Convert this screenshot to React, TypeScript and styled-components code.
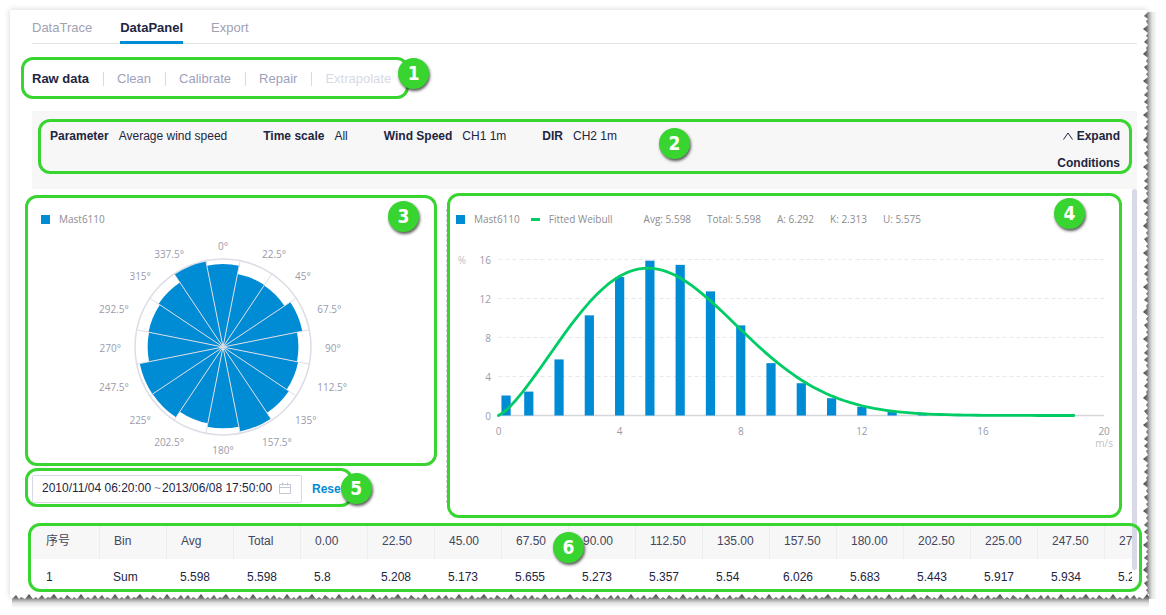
import React from "react";
import styled, { createGlobalStyle } from "styled-components";

const BLUE = "#008bd5";
const GREEN = "#38d430";
const CURVE = "#00cc66";
const INK = "#22253f";
const UI = `"Liberation Sans", Arial, "Noto Sans CJK SC", sans-serif`;
const CHART = `"Open Sans", "Noto Sans", sans-serif`;

const GlobalStyle = createGlobalStyle`
  *, *::before, *::after { box-sizing: border-box; }
  body { margin: 0; background: #fff; color: ${INK}; font: 12px/20px ${UI}; }
  button, input { font: inherit; color: inherit; background: none; border: 0; padding: 0; margin: 0; }
  button { cursor: pointer; }
`;

const Sheet = styled.main`
  position: relative;
  margin: 10px 19px 18px 10px;
  padding: 0 10px 2px 22px;
  background: #fff;
  box-shadow: 0 0 6px rgba(0, 0, 0, 0.18);
`;

const Tabs = styled.nav`
  display: flex;
  gap: 28px;
  height: 34px;
  border-bottom: 1px solid #e3e3e6;
`;

const Tab = styled.button<{ $active?: boolean }>`
  height: 34px;
  padding-top: 5px;
  font-size: 13px;
  font-weight: ${(p) => (p.$active ? 700 : 400)};
  color: ${(p) => (p.$active ? INK : "#a0a1b2")};
  border-bottom: 3px solid ${(p) => (p.$active ? BLUE : "transparent")};
`;

const SubNav = styled.nav`
  display: flex;
  align-items: center;
  height: 67px;
`;

const Steps = styled.div`
  position: relative;
  display: flex;
  align-items: center;
  height: 20px;
  padding-top: 2px;
`;

const Step = styled.button<{ $active?: boolean }>`
  font-size: 13px;
  font-weight: ${(p) => (p.$active ? 700 : 400)};
  color: ${(p) => (p.$active ? INK : "#a0a1bc")};
  & + & {
    margin-left: 14px;
    padding-left: 14px;
    background: linear-gradient(#d8d9e6, #d8d9e6) left center / 1px 14px no-repeat;
  }
  &:disabled { color: #d8d9e6; }
`;

const Conditions = styled.section`
  position: relative;
  display: flex;
  justify-content: space-between;
  align-items: flex-start;
  height: 78px;
  padding: 12px 17px 0 18px;
  background: #f7f7f7;
`;

const Filters = styled.dl`
  display: flex;
  gap: 36px;
  margin: 0;
  line-height: 27px;
`;

const Filter = styled.div`
  display: flex;
  gap: 10px;
  dt { font-weight: 700; }
  dd { margin: 0; }
`;

const ExpandButton = styled.button`
  width: 66px;
  font-weight: 700;
  line-height: 27px;
  text-align: right;
  svg { margin-right: 4px; }
`;

const Body = styled.div`
  position: relative;
  padding: 20px 5px 0 0;
`;

const ScrollThumb = styled.div`
  position: absolute;
  z-index: 1;
  top: 0;
  right: 0;
  bottom: 25px;
  width: 5px;
  border-radius: 3px;
  background: #d8d9e6;
`;

const Charts = styled.div`
  display: grid;
  grid-template-columns: 415px minmax(0, 1fr);
`;

const ChartColumn = styled.section<{ $divided?: boolean }>`
  position: relative;
  display: flex;
  flex-direction: column;
  border-right: ${(p) => (p.$divided ? "1px dashed #d0d0d8" : "0")};
`;

const Plot = styled.svg`
  display: block;
  width: 100%;
  text { font: 10px ${CHART}; fill: #9a9bab; }
  text.unit { fill: #c0c1c9; }
`;

const Legend = styled.div`
  display: flex;
  gap: 16px;
  height: 20px;
  padding-left: 9px;
  font: 10px/20px ${CHART};
  color: #8c8c90;
`;

const Series = styled.span<{ $line?: boolean }>`
  display: flex;
  align-items: center;
  gap: 9px;
  margin-left: ${(p) => (p.$line ? "-5px" : "0")};
  margin-right: ${(p) => (p.$line ? "15px" : "0")};
  &::before {
    content: "";
    width: 9px;
    height: ${(p) => (p.$line ? "3px" : "9px")};
    background: ${(p) => (p.$line ? CURVE : BLUE)};
  }
`;

const DateRow = styled.div`
  position: relative;
  display: flex;
  align-items: center;
  gap: 10px;
  width: fit-content;
  margin-top: 9px;
`;

const RangeBox = styled.div`
  display: flex;
  align-items: center;
  width: 270px;
  height: 28px;
  padding: 0 10px 2px 9px;
  border: 1px solid #d8d9e6;
  border-radius: 2px;
  span { width: 9px; text-align: center; color: #8c8c9a; }
  svg { margin-left: auto; }
`;

const DateInput = styled.input`
  width: 111px;
  height: 20px;
  outline: none;
`;

const ResetButton = styled.button`
  font-weight: 700;
  color: ${BLUE};
`;

const TableArea = styled.section`
  position: relative;
  margin-top: 20px;
`;

const TableScroll = styled.div`
  overflow: hidden;
`;

const Table = styled.table`
  table-layout: fixed;
  width: 1139px;
  border-collapse: separate;
  border-spacing: 0;
  th, td {
    width: 67px;
    height: 36px;
    padding: 0 0 0 14px;
    text-align: left;
    font-weight: 400;
  }
  th {
    background: #f7f7f7;
    color: #44465c;
  }
  th + th { border-left: 1px solid #ececf1; }
`;

type Edges = { $top: number; $right: number; $bottom: number; $left: number };

const Outline = styled.div<Edges>`
  position: absolute;
  z-index: 2;
  top: ${(p) => p.$top}px;
  right: ${(p) => p.$right}px;
  bottom: ${(p) => p.$bottom}px;
  left: ${(p) => p.$left}px;
  border: 3px solid ${GREEN};
  border-radius: 12px;
  pointer-events: none;
`;

const Badge = styled.span<{ $top: number; $left?: number; $right?: number }>`
  position: absolute;
  top: ${(p) => p.$top}px;
  left: ${(p) => (p.$left === undefined ? "auto" : `${p.$left}px`)};
  right: ${(p) => (p.$right === undefined ? "auto" : `${p.$right}px`)};
  width: 31px;
  height: 31px;
  border-radius: 50%;
  background: ${GREEN};
  box-shadow: 1px 2px 3px rgba(0, 0, 0, 0.65);
  color: #fff;
  font: bold 19px/31px "DejaVu Sans Condensed", "DejaVu Sans", sans-serif;
  text-align: center;
`;

const TornRight = styled.svg`
  position: absolute;
  top: 2px;
  right: -10px;
  width: 14px;
  height: 100%;
`;

const TornBottom = styled.svg`
  position: absolute;
  left: 2px;
  bottom: -11px;
  width: 100%;
  height: 14px;
`;

const teeth = [
  [0, 5], [4, 1], [7, 5], [9, 3], [13, 5], [17, 0], [21, 5], [24, 3], [26, 5], [30, 1],
  [33, 5], [36, 3], [38, 4], [42, 0], [46, 5], [49, 3], [52, 5], [55, 1], [60, 5], [62, 3],
  [65, 5], [69, 0], [73, 5], [76, 3], [79, 5], [83, 1], [86, 5],
];

function ShadowStops() {
  return (
    <>
      <stop offset="0" stopColor="#444" />
      <stop offset="0.3" stopColor="#777" />
      <stop offset="0.42" stopColor="#aaa" />
      <stop offset="0.65" stopColor="#e4e4e4" />
      <stop offset="1" stopColor="#fff" />
    </>
  );
}

function TornEdges() {
  const down = teeth.map(([along, out]) => `${out},${along}`).join(" ");
  const across = teeth.map(([along, out]) => `${along},${out}`).join(" ");
  return (
    <>
      <TornRight aria-hidden="true">
        <defs>
          <linearGradient id="fadeRight">{ShadowStops()}</linearGradient>
          <pattern id="teethRight" width="14" height="86" patternUnits="userSpaceOnUse">
            <polygon points={`0,0 ${down} 0,86`} fill="#fff" />
          </pattern>
        </defs>
        <rect width="14" height="100%" fill="url(#fadeRight)" />
        <rect width="14" height="100%" fill="url(#teethRight)" />
      </TornRight>
      <TornBottom aria-hidden="true">
        <defs>
          <linearGradient id="fadeBottom" x2="0" y2="1">{ShadowStops()}</linearGradient>
          <pattern id="teethBottom" width="86" height="14" patternUnits="userSpaceOnUse">
            <polygon points={`0,0 ${across} 86,0`} fill="#fff" />
          </pattern>
        </defs>
        <rect width="100%" height="14" fill="url(#fadeBottom)" />
        <rect width="100%" height="14" fill="url(#teethBottom)" />
      </TornBottom>
    </>
  );
}

const sectors = [
  5.8, 5.208, 5.173, 5.655, 5.273, 5.357, 5.54, 6.026, 5.683, 5.443, 5.917, 5.934, 5.27, 5.31, 5.42, 6.09,
];

function WindRose() {
  const cx = 191;
  const cy = 118;
  const ring = 88;
  const at = (deg: number, r: number) => {
    const a = (deg * Math.PI) / 180;
    return [cx + r * Math.sin(a), cy - r * Math.cos(a)];
  };
  return (
    <Plot viewBox="0 0 414 237" role="img" aria-label="Wind rose">
      <circle cx={cx} cy={cy} r={ring} fill="none" stroke="#dcdde6" strokeWidth="1.5" />
      {sectors.map((value, i) => {
        const r = value * 14.3;
        const [x1, y1] = at(i * 22.5 - 11.25, r);
        const [x2, y2] = at(i * 22.5 + 11.25, r);
        return <path key={i} d={`M${cx} ${cy}L${x1} ${y1}A${r} ${r} 0 0 1 ${x2} ${y2}Z`} fill={BLUE} />;
      })}
      {sectors.map((_, i) => {
        const [x, y] = at(i * 22.5 + 11.25, ring);
        return <line key={i} x1={cx} y1={cy} x2={x} y2={y} stroke="#dcdde6" />;
      })}
      {sectors.map((_, i) => {
        const [x, y] = at(i * 22.5, 102);
        const anchor = i % 8 === 0 ? "middle" : i < 8 ? "start" : "end";
        return (
          <text key={i} x={x} y={y + 5} textAnchor={anchor}>{`${i * 22.5}°`}</text>
        );
      })}
    </Plot>
  );
}

const bars: [number, number][] = [
  [0.25, 2.05], [1, 2.45], [2, 5.75], [3, 10.27], [4, 14.2], [5, 15.88], [6, 15.45], [7, 12.73],
  [8, 9.24], [9, 5.37], [10, 3.31], [11, 1.77], [12, 0.9], [13, 0.4], [14, 0.13],
];

function WeibullChart() {
  const px = (v: number) => 51.5 + v * 30.28;
  const py = (v: number) => 186.5 - v * 9.75;
  const a = 6.292;
  const k = 2.313;
  const curve = Array.from({ length: 96 }, (_, i) => {
    const v = i / 5;
    const density = (k / a) * Math.pow(v / a, k - 1) * Math.exp(-Math.pow(v / a, k));
    return `${px(v).toFixed(2)},${py(density * 100).toFixed(2)}`;
  }).join(" ");
  return (
    <Plot viewBox="0 0 685 237" role="img" aria-label="Wind speed distribution">
      {[4, 8, 12, 16].map((v) => (
        <line key={v} x1={px(0)} x2={px(20)} y1={py(v)} y2={py(v)} stroke="#e8e8ea" strokeDasharray="4 3" />
      ))}
      <line x1={px(0)} x2={px(20)} y1="186.5" y2="186.5" stroke="#d6d6da" strokeWidth="1.5" />
      {bars.map(([v, h]) => (
        <rect key={v} x={px(v) - 4.6} y={py(h)} width="9.2" height={h * 9.75} fill={BLUE} />
      ))}
      <polyline points={curve} fill="none" stroke={CURVE} strokeWidth="2.8" strokeLinecap="round" strokeLinejoin="round" />
      {[0, 4, 8, 12, 16].map((v) => (
        <text key={v} x="44" y={py(v) + 4} textAnchor="end">{v}</text>
      ))}
      {[0, 4, 8, 12, 16, 20].map((v) => (
        <text key={v} x={px(v)} y="206" textAnchor="middle">{v}</text>
      ))}
      <text className="unit" x="15" y="35" textAnchor="middle">%</text>
      <text className="unit" x={px(20)} y="218" textAnchor="middle">m/s</text>
    </Plot>
  );
}

const filters = [
  ["Parameter", "Average wind speed"],
  ["Time scale", "All"],
  ["Wind Speed", "CH1 1m"],
  ["DIR", "CH2 1m"],
];

const stats = ["Avg: 5.598", "Total: 5.598", "A: 6.292", "K: 2.313", "U: 5.575"];

const columns = [
  ["序号", "1"], ["Bin", "Sum"], ["Avg", "5.598"], ["Total", "5.598"], ["0.00", "5.8"], ["22.50", "5.208"],
  ["45.00", "5.173"], ["67.50", "5.655"], ["90.00", "5.273"], ["112.50", "5.357"], ["135.00", "5.54"],
  ["157.50", "6.026"], ["180.00", "5.683"], ["202.50", "5.443"], ["225.00", "5.917"], ["247.50", "5.934"],
  ["270", "5.2"],
];

export default function App() {
  return (
    <>
      <GlobalStyle />
      <Sheet>
        <TornEdges />
        <Tabs aria-label="Views">
          <Tab>DataTrace</Tab>
          <Tab $active>DataPanel</Tab>
          <Tab>Export</Tab>
        </Tabs>

        <SubNav aria-label="Processing steps">
          <Steps>
            <Step $active>Raw data</Step>
            <Step>Clean</Step>
            <Step>Calibrate</Step>
            <Step>Repair</Step>
            <Step disabled>Extrapolate</Step>
            <Outline $top={-11} $right={-18} $bottom={-11} $left={-11}>
              <Badge $top={-2} $right={-23}>1</Badge>
            </Outline>
          </Steps>
        </SubNav>

        <Conditions>
          <Filters>
            {filters.map(([name, value]) => (
              <Filter key={name}>
                <dt>{name}</dt>
                <dd>{value}</dd>
              </Filter>
            ))}
          </Filters>
          <ExpandButton>
            <svg width="10" height="8" viewBox="0 0 10 8" fill="none" stroke={INK} aria-hidden="true">
              <path d="M0.5 7.5L5 1L9.5 7.5" />
            </svg>
            Expand Conditions
          </ExpandButton>
          <Outline $top={8} $right={5} $bottom={15} $left={6}>
            <Badge $top={6} $left={618}>2</Badge>
          </Outline>
        </Conditions>

        <Body>
          <Charts>
            <ChartColumn $divided>
              <Legend>
                <Series>Mast6110</Series>
              </Legend>
              <WindRose />
              <Outline $top={-14} $right={9} $bottom={37} $left={-7}>
                <Badge $top={3} $right={15}>3</Badge>
              </Outline>
              <DateRow>
                <RangeBox>
                  <DateInput aria-label="Start time" defaultValue="2010/11/04 06:20:00" />
                  <span>~</span>
                  <DateInput aria-label="End time" defaultValue="2013/06/08 17:50:00" />
                  <svg width="12" height="12" viewBox="0 0 12 12" fill="none" stroke="#c4c5d2" aria-hidden="true">
                    <path d="M0.5 2.5h11v9h-11zM0.5 5.5h11M3.5 0.5v3M8.5 0.5v3" />
                  </svg>
                </RangeBox>
                <ResetButton>Reset</ResetButton>
                <Outline $top={-7} $right={-8} $bottom={-4} $left={-7}>
                  <Badge $top={2} $right={-22}>5</Badge>
                </Outline>
              </DateRow>
            </ChartColumn>
            <ChartColumn>
              <Legend>
                <Series>Mast6110</Series>
                <Series $line>Fitted Weibull</Series>
                {stats.map((s) => (
                  <span key={s}>{s}</span>
                ))}
              </Legend>
              <WeibullChart />
              <Outline $top={-16} $right={10} $bottom={-15} $left={0}>
                <Badge $top={2} $right={34}>4</Badge>
              </Outline>
            </ChartColumn>
          </Charts>

          <TableArea>
            <TableScroll>
              <Table>
                <thead>
                  <tr>
                    {columns.map(([head]) => (
                      <th key={head} scope="col">{head}</th>
                    ))}
                  </tr>
                </thead>
                <tbody>
                  <tr>
                    {columns.map(([head, value]) => (
                      <td key={head}>{value}</td>
                    ))}
                  </tr>
                </tbody>
              </Table>
            </TableScroll>
            <Outline $top={0} $right={-10} $bottom={3} $left={-4}>
              <Badge $top={6} $left={522}>6</Badge>
            </Outline>
          </TableArea>
          <ScrollThumb />
        </Body>
      </Sheet>
    </>
  );
}
